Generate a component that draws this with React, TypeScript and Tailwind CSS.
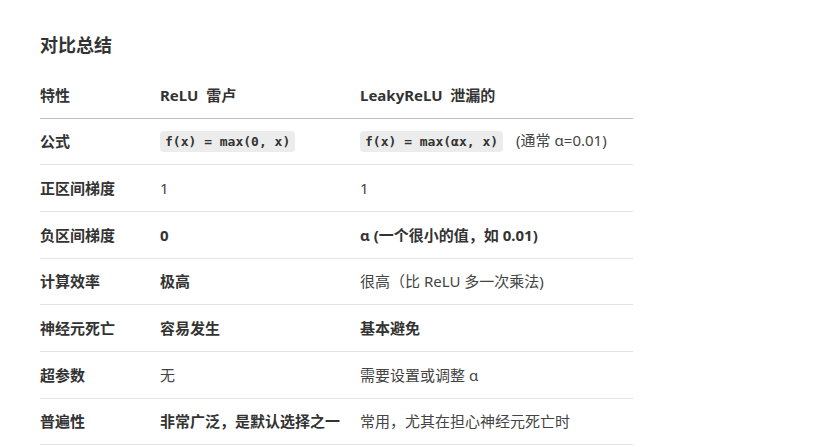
const rows: { label: string; a: React.ReactNode; b: React.ReactNode }[] = [
  {
    label: "公式",
    a: <code className="rounded bg-[#ececec] px-[5px] py-[3px] font-['DejaVu_Sans_Mono',monospace] text-[13px] font-bold text-[#333]">f(x) = max(0, x)</code>,
    b: (
      <span>
        <code className="rounded bg-[#ececec] px-[5px] py-[3px] font-['DejaVu_Sans_Mono',monospace] text-[13px] font-bold text-[#333]">f(x) = max(αx, x)</code>
        <span className="ml-[13px] text-[#444]">(通常 α=0.01)</span>
      </span>
    ),
  },
  { label: "正区间梯度", a: <span className="text-[#444]">1</span>, b: <span className="text-[#444]">1</span> },
  { label: "负区间梯度", a: <b>0</b>, b: <b>α (一个很小的值，如 0.01)</b> },
  { label: "计算效率", a: <b>极高</b>, b: <span className="text-[#444]">很高（比 ReLU 多一次乘法)</span> },
  { label: "神经元死亡", a: <b>容易发生</b>, b: <b>基本避免</b> },
  { label: "超参数", a: <span className="text-[#444]">无</span>, b: <span className="text-[#444]">需要设置或调整 α</span> },
  { label: "普遍性", a: <b>非常广泛，是默认选择之一</b>, b: <span className="text-[#444]">常用，尤其在担心神经元死亡时</span> },
];

export default function App() {
  return (
    <div className="min-h-[447px] bg-white pl-[40px] pt-[32px] font-['Noto_Sans','Noto_Sans_CJK_SC',sans-serif] text-[15px] leading-[20px] text-[#333]">
      <h2 className="text-[18px] font-bold leading-[26px] text-[#333]">对比总结</h2>
      <table className="mt-[14px] w-[593px] border-collapse">
        <thead>
          <tr className="border-b border-[#bdbdbd]">
            <th className="h-[46px] w-[120px] p-0 text-left font-bold">特性</th>
            <th className="h-[46px] w-[200px] p-0 text-left font-bold">ReLU&nbsp; 雷卢</th>
            <th className="h-[46px] p-0 text-left font-bold">LeakyReLU&nbsp; 泄漏的</th>
          </tr>
        </thead>
        <tbody>
          {rows.map((r) => (
            <tr key={r.label} className="border-b border-[#e3e3e3]">
              <td className="h-[46.7px] p-0 font-bold">{r.label}</td>
              <td className="h-[46.7px] p-0">{r.a}</td>
              <td className="h-[46.7px] p-0">{r.b}</td>
            </tr>
          ))}
        </tbody>
      </table>
    </div>
  );
}
